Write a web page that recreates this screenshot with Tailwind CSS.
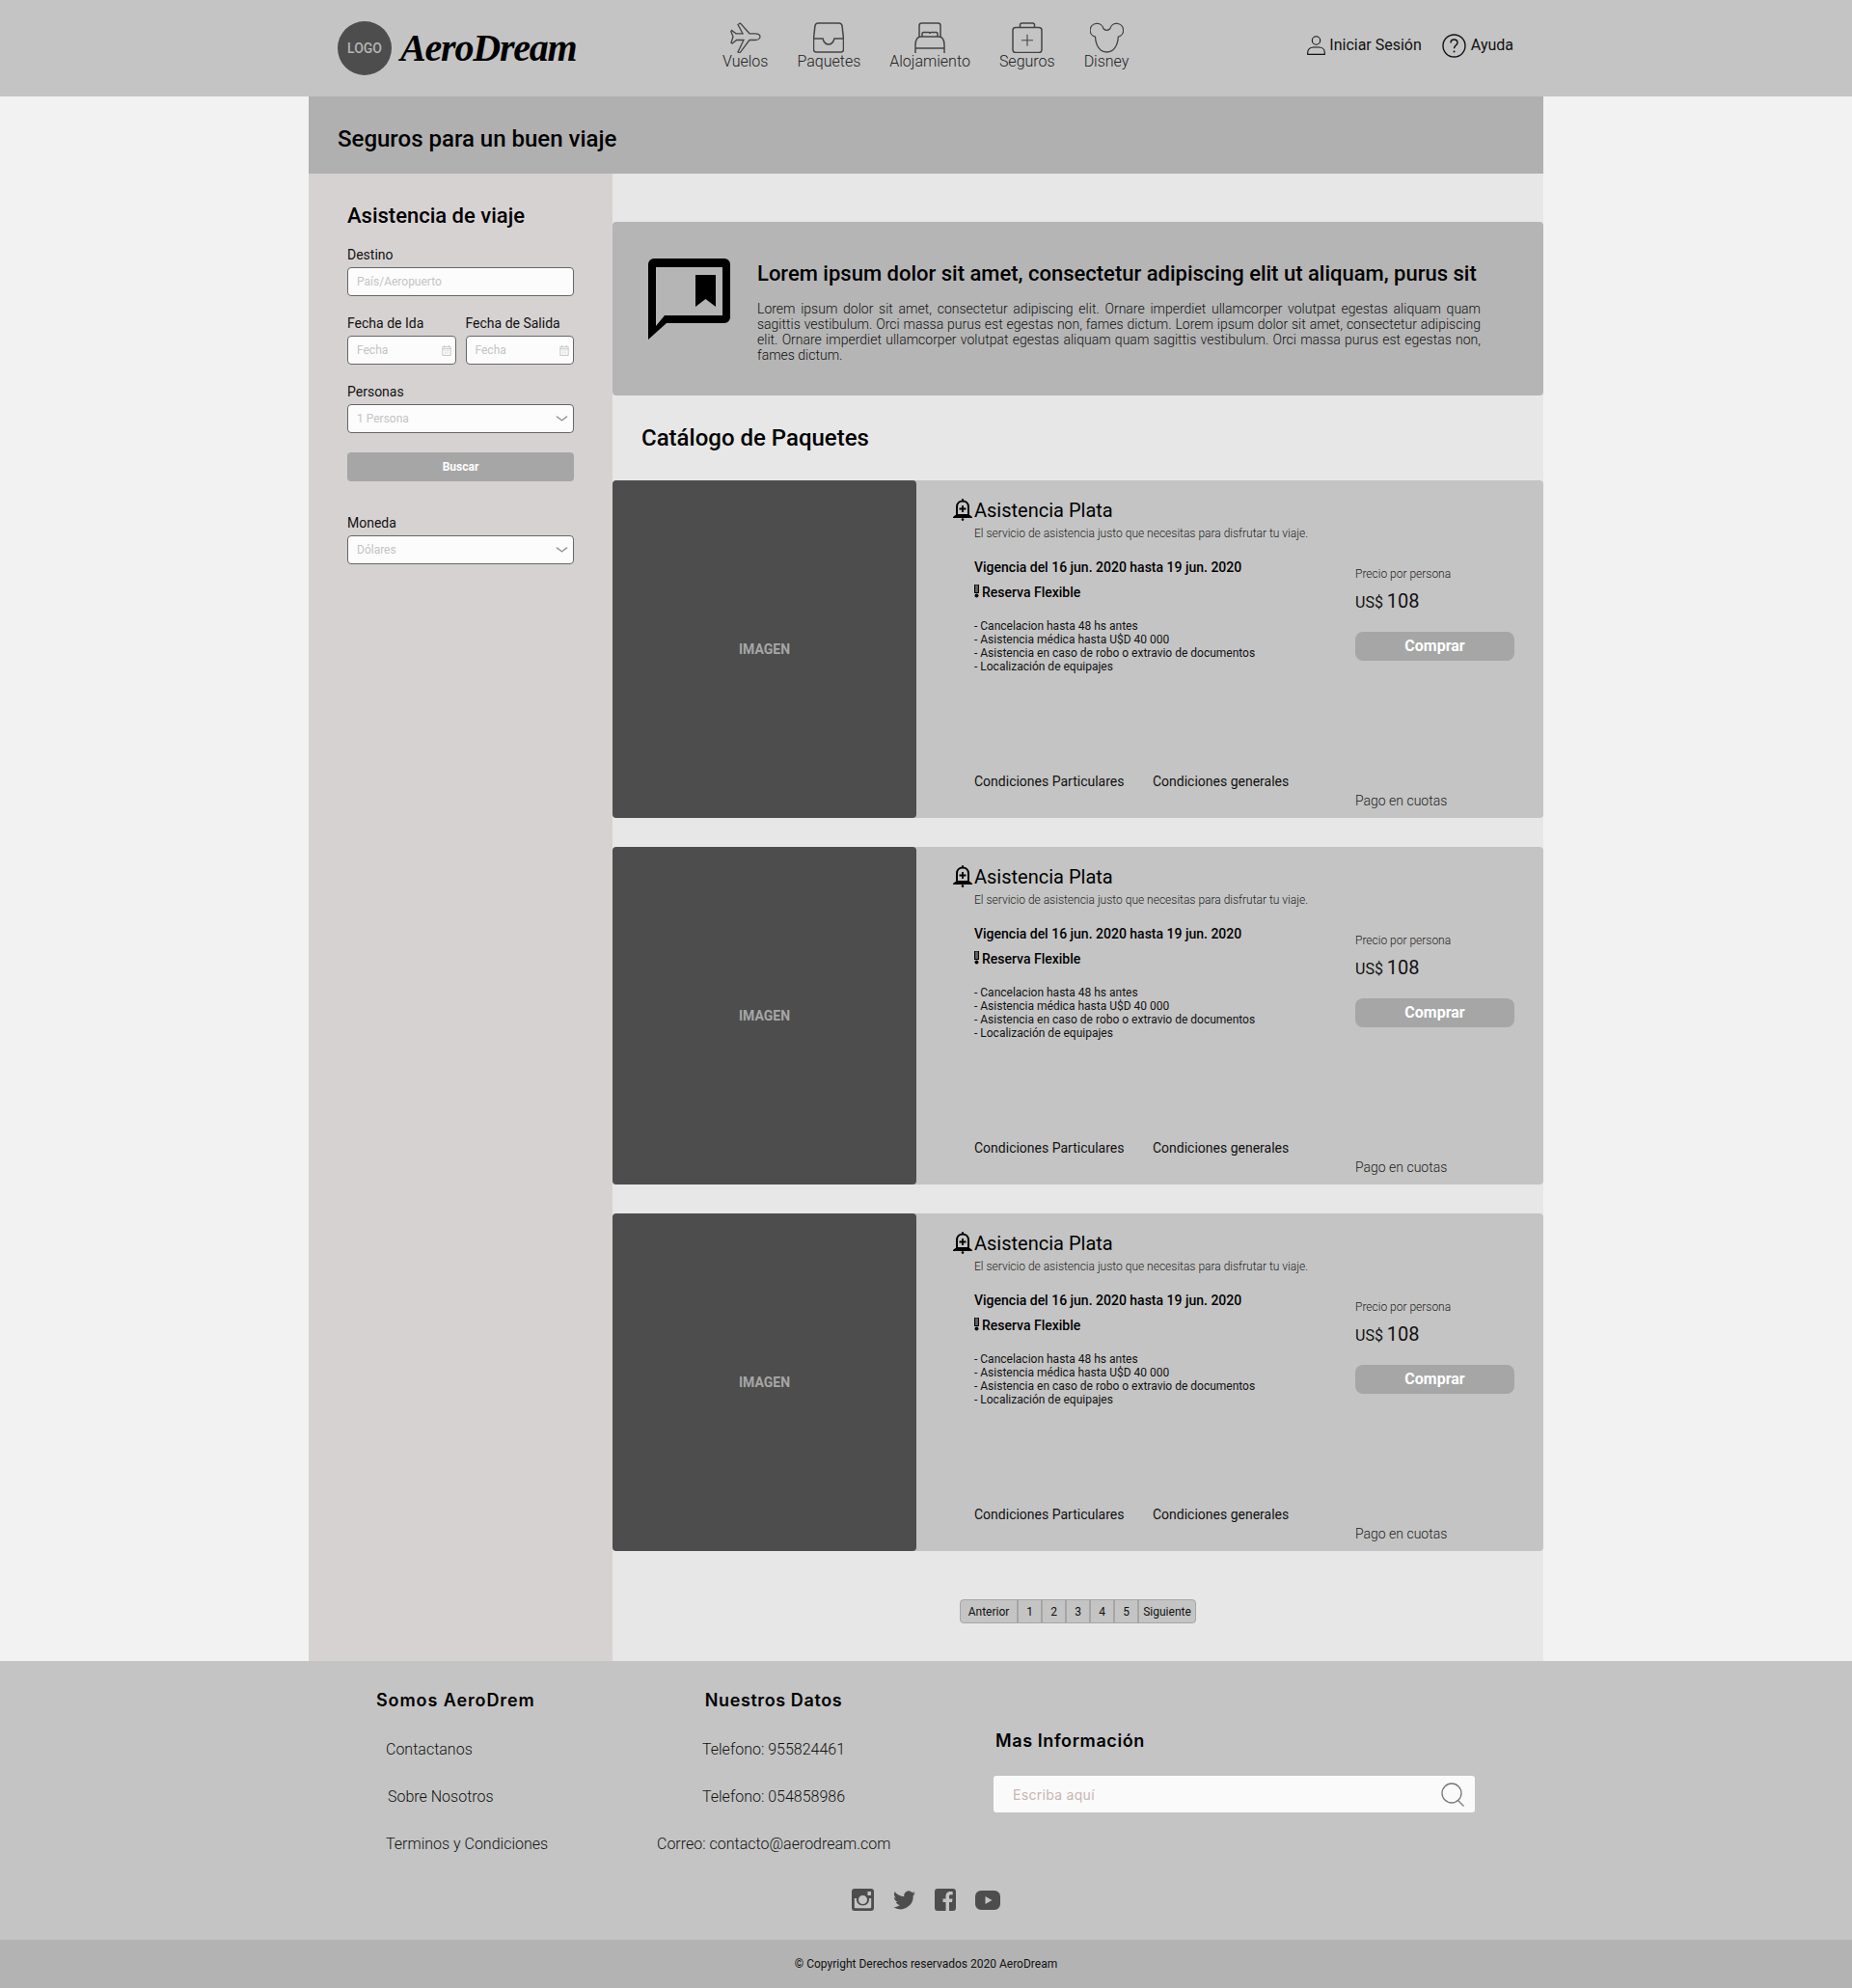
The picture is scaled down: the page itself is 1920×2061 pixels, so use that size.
<!DOCTYPE html>
<html lang="es">
<head>
    <meta charset="UTF-8">
    <meta name="viewport" content="width=device-width, initial-scale=1.0">
    <title>AeroDream - Seguros</title>
    <script src="https://cdn.jsdelivr.net/npm/@tailwindcss/browser@4"></script>
</head>
<body class="bg-[#f2f2f2] text-black font-['Roboto',sans-serif]">

    <!-- shared icons -->
    <svg class="hidden">
        <symbol id="bell" viewBox="0 0 20 24">
            <path d="M10 1.200v2M4 18.500V9.500C4 6 6.500 3.500 10 3.500s6 2.500 6 6v9M1.500 20h17l-2.500-2H4z" fill="none" stroke="currentColor" stroke-width="2"/>
            <path d="M10 8v7M6.500 11.500h7" fill="none" stroke="currentColor" stroke-width="1.800"/>
            <circle cx="10" cy="22.600" r="1.300" fill="currentColor"/>
        </symbol>
        <symbol id="chevron" viewBox="0 0 14 8">
            <path d="M1 1.500c2 1.500 4 3 6 4.500 2-1.500 4-3 6-4.500" fill="none" stroke="currentColor" stroke-width="1.500"/>
        </symbol>
        <symbol id="calendar" viewBox="0 0 12 14">
            <path d="M1 3h10v10.500H1zM1 5.500h10M3.200 1v2M8.800 1v2M3.500 8h1M5.500 8h1M7.500 8h1M3.500 10.500h1M5.500 10.500h1M7.500 10.500h1" fill="none" stroke="currentColor" stroke-width="1"/>
        </symbol>
    </svg>

    <!-- Header -->
    <header class="bg-[#c4c4c4] h-[100px]">
        <div class="w-[1280px] mx-auto h-full flex items-center pl-[30px] pr-[31px]">
            <div class="w-[399px] flex items-center">
                <div class="w-[56px] h-[56px] rounded-full bg-[#4d4d4d] flex items-center justify-center text-[14px] font-medium text-[#b5b5b5]">LOGO</div>
                <span class="pl-[9px] text-[40px] leading-[50px] font-bold italic tracking-[-1.200px] font-['Liberation_Serif',serif]">AeroDream</span>
            </div>
            <nav class="flex gap-[30px] mt-[-3px] text-[16px] leading-[20px] font-light text-[#222]">
                <a class="flex flex-col items-center">
                    <svg class="w-[32px] h-[32px] mt-[-1px] mb-[-1px]" viewBox="0 0 32 32" fill="none" stroke="#444" stroke-width="1.300">
                        <path d="M31 15c0-2-2.500-3.200-5-3.200H20L10.500 1 8 2.500l5 9.300H6L1.500 8.500.8 9.500 3 15 1 21.500l1.200.5 4.500-3.500H14L8 31l2 .8 10-13.300h6c2.500 0 5-1.300 5-3.500z"/>
                    </svg>
                    <span>Vuelos</span>
                </a>
                <a class="flex flex-col items-center">
                    <svg class="w-[32px] h-[32px] mt-[-1px] mb-[-1px]" viewBox="0 0 32 32" fill="none" stroke="#444" stroke-width="1.500">
                        <path d="M5 1h22c1.500 0 2.500 1 3 2.500L31.500 17v11.500c0 1.500-1 2.500-2.500 2.500H3c-1.500 0-2.500-1-2.500-2.500V17L2 3.500C2.500 2 3.500 1 5 1z"/>
                        <path d="M.5 17H10c1 4 3 6 6 6s5-2 6-6h9.500"/>
                    </svg>
                    <span>Paquetes</span>
                </a>
                <a class="flex flex-col items-center">
                    <svg class="w-[32px] h-[32px] mt-[-1px] mb-[-1px]" viewBox="0 0 32 32" fill="none" stroke="#444" stroke-width="1.500">
                        <path d="M5 15V3.500C5 2 6 1 7.500 1h17C26 1 27 2 27 3.500V15"/>
                        <path d="M8 15v-3c0-1 .7-1.500 1.500-1.500H15c.8 0 1 .7 1 1.500 0-.8.2-1.500 1-1.500h5.500c.8 0 1.500.5 1.500 1.500v3"/>
                        <path d="M1 32v-8C1 19 3 15 7 15h18c4 0 6 4 6 9v8M1 27h30"/>
                    </svg>
                    <span>Alojamiento</span>
                </a>
                <a class="flex flex-col items-center">
                    <svg class="w-[32px] h-[32px] mt-[-1px] mb-[-1px]" viewBox="0 0 32 32" fill="none" stroke="#444" stroke-width="1.500">
                        <rect x="1" y="5.500" width="30" height="26" rx="3"/>
                        <path d="M8.500 5.500V3c0-1.200.8-2 2-2h11c1.200 0 2 .8 2 2v2.500"/>
                        <path d="M16 12.700v12M10 18.700h12" stroke-width="1.100"/>
                    </svg>
                    <span>Seguros</span>
                </a>
                <a class="flex flex-col items-center">
                    <svg class="w-[35px] h-[32px] mt-[-1px] mb-[-1px]" viewBox="0 0 35 32" fill="none" stroke="#444" stroke-width="1.300">
                        <path d="M14 6.800A7 7 0 1 0 5.500 15.200C6 24 10 31 17.400 31S28.800 24 29.300 15.200A7 7 0 1 0 20.800 6.800C18.500 9 16.300 9 14 6.800z"/>
                    </svg>
                    <span>Disney</span>
                </a>
            </nav>
            <div class="ml-auto mt-[-6px] flex items-center gap-[21px] text-[16px] text-[#111]">
                <a class="flex items-center gap-[4px]">
                    <svg class="w-[19px] h-[20px]" viewBox="0 0 19 20" fill="none" stroke="currentColor" stroke-width="1.100">
                        <circle cx="9.500" cy="5" r="4.200"/>
                        <path d="M.7 19.400v-2C.7 14 3.500 12 6.500 12h6c3 0 5.800 2 5.800 5.400v2z"/>
                    </svg>
                    <span>Iniciar Sesión</span>
                </a>
                <a class="flex items-center gap-[5px]">
                    <svg class="w-[25px] h-[25px]" viewBox="0 0 25 25" fill="none" stroke="currentColor" stroke-width="1.400">
                        <circle cx="12.500" cy="12.500" r="11.500"/>
                        <path d="M9 9.500c0-2.200 1.500-3.500 3.500-3.500S16 7.300 16 9.200c0 2.700-3.500 3-3.500 6"/>
                        <circle cx="12.500" cy="18.500" r="1" fill="currentColor" stroke="none"/>
                    </svg>
                    <span>Ayuda</span>
                </a>
            </div>
        </div>
    </header>

    <div class="w-[1280px] mx-auto">
        <div class="bg-[#b0b0b0] h-[80px] flex items-center pl-[30px] pt-[7px]">
            <h1 class="text-[24px] font-medium">Seguros para un buen viaje</h1>
        </div>

        <div class="flex h-[1542px]">
            <!-- Search sidebar -->
            <aside class="w-[315px] bg-[#d7d2d2] pl-[40px] pr-[40px] pt-[30px] text-[14px] leading-[20px] text-[#111]">
                <h2 class="text-[22px] leading-[28px] font-medium text-black mb-[16px]">Asistencia de viaje</h2>
                <label>Destino</label>
                <div class="mt-[3px] h-[30px] flex items-center px-[9px] bg-[#fcfcfc] border border-[#666] rounded-[4px] text-[12px] text-[#c4c4c4]">País/Aeropuerto</div>
                <div class="mt-[18px] flex gap-[10px]">
                    <div class="w-[112.500px]">
                        <label>Fecha de Ida</label>
                        <div class="mt-[3px] h-[30px] flex items-center justify-between pl-[9px] pr-[4px] bg-[#fcfcfc] border border-[#666] rounded-[4px] text-[12px] text-[#c4c4c4]">Fecha <svg class="w-[10px] h-[12px] text-[#bbb]"><use href="#calendar"/></svg></div>
                    </div>
                    <div class="w-[112.500px]">
                        <label>Fecha de Salida</label>
                        <div class="mt-[3px] h-[30px] flex items-center justify-between pl-[9px] pr-[4px] bg-[#fcfcfc] border border-[#666] rounded-[4px] text-[12px] text-[#c4c4c4]">Fecha <svg class="w-[10px] h-[12px] text-[#bbb]"><use href="#calendar"/></svg></div>
                    </div>
                </div>
                <div class="mt-[18px]">
                    <label>Personas</label>
                    <div class="mt-[3px] h-[30px] flex items-center justify-between pl-[9px] pr-[5px] bg-[#fcfcfc] border border-[#666] rounded-[4px] text-[12px] text-[#c4c4c4]">1 Persona <svg class="w-[13px] h-[8px] text-[#999]"><use href="#chevron"/></svg></div>
                </div>
                <button class="mt-[20px] w-full h-[30px] bg-[#a6a6a6] rounded-[4px] text-[12px] font-bold text-white">Buscar</button>
                <div class="mt-[33px]">
                    <label>Moneda</label>
                    <div class="mt-[3px] h-[30px] flex items-center justify-between pl-[9px] pr-[5px] bg-[#fcfcfc] border border-[#666] rounded-[4px] text-[12px] text-[#c4c4c4]">Dólares <svg class="w-[13px] h-[8px] text-[#999]"><use href="#chevron"/></svg></div>
                </div>
            </aside>

            <main class="w-[965px] bg-[#e7e7e7] pt-[50px]">
                <!-- Banner -->
                <section class="h-[180px] bg-[#b5b5b5] rounded-[4px] flex pl-[37px] pr-[65px]">
                    <svg class="w-[85px] h-[84px] mt-[38px] shrink-0" viewBox="0 0 85 84">
                        <path d="M6 0h73a6 6 0 0 1 6 6v55a6 6 0 0 1-6 6H19L0 84V6a6 6 0 0 1 6-6zM8 9v61l9-11h60V9z" fill="#000" fill-rule="evenodd"/>
                        <path d="M49 17h21v33L59.500 42 49 50z" fill="#000"/>
                    </svg>
                    <div class="ml-[28px] w-[750px]">
                        <h2 class="mt-[39px] text-[22px] leading-[30px] font-medium whitespace-nowrap">Lorem ipsum dolor sit amet, consectetur adipiscing elit ut aliquam, purus sit</h2>
                        <p class="mt-[13px] text-[14px] leading-[16px] font-light text-justify text-[#111]">Lorem ipsum dolor sit amet, consectetur adipiscing elit. Ornare imperdiet ullamcorper volutpat egestas aliquam quam sagittis vestibulum. Orci massa purus est egestas non, fames dictum. Lorem ipsum dolor sit amet, consectetur adipiscing elit. Ornare imperdiet ullamcorper volutpat egestas aliquam quam sagittis vestibulum. Orci massa purus est egestas non, fames dictum.</p>
                    </div>
                </section>

                <h2 class="mt-[28px] ml-[30px] text-[24px] leading-[32px] font-medium">Catálogo de Paquetes</h2>

                <!-- Catalog -->
                <div class="mt-[28px] flex flex-col gap-[30px]">
                    <article class="h-[350px] bg-[#c4c4c4] rounded-[4px] flex">
                        <div class="w-[315px] bg-[#4d4d4d] rounded-[4px] flex items-center justify-center text-[14px] font-bold text-[#a6a6a6]">IMAGEN</div>
                        <div class="w-[455px] pl-[60px] pt-[19px] pb-[28px] flex flex-col">
                            <h3 class="relative text-[20px] leading-[24px]">
                                <svg class="absolute left-[-22px] top-[-1px] w-[20px] h-[24px]"><use href="#bell"/></svg>
                                Asistencia Plata
                            </h3>
                            <p class="mt-[4px] text-[12px] leading-[16px] font-light text-[#222]">El servicio de asistencia justo que necesitas para disfrutar tu viaje.</p>
                            <p class="mt-[17px] text-[14px] leading-[20px] font-medium">Vigencia del 16 jun. 2020 hasta 19 jun. 2020</p>
                            <p class="mt-[6px] text-[14px] leading-[20px] font-medium flex items-center gap-[3px]">
                                <svg class="w-[5px] h-[14px] mt-[-3px]" viewBox="0 0 5 14"><path d="M.5 0h4v8.500h-4z" fill="#666" stroke="#000" stroke-width="1.200"/><circle cx="2.500" cy="11.500" r="2"/></svg>
                                Reserva Flexible
                            </p>
                            <ul class="mt-[18px] text-[12px] leading-[14px] text-[#111]">
                                <li>- Cancelacion hasta 48 hs antes</li>
                                <li>- Asistencia médica hasta U$D 40 000</li>
                                <li>- Asistencia en caso de robo o extravio de documentos</li>
                                <li>- Localización de equipajes</li>
                            </ul>
                            <div class="mt-auto flex gap-[29.500px] text-[14px] leading-[20px] text-[#111]">
                                <a>Condiciones Particulares</a>
                                <a>Condiciones generales</a>
                            </div>
                        </div>
                        <div class="w-[165px] pt-[89px] pb-[8px] flex flex-col">
                            <p class="text-[12px] leading-[16px] font-light text-[#222]">Precio por persona</p>
                            <p class="mt-[6px] text-[20px] leading-[28px] text-[#111]"><span class="text-[16px] mr-[-1px]">US$</span> 108</p>
                            <button class="mt-[16px] h-[30px] bg-[#a6a6a6] rounded-[8px] text-[16px] font-bold text-white">Comprar</button>
                            <p class="mt-auto text-[14px] leading-[20px] font-light text-[#222]">Pago en cuotas</p>
                        </div>
                    </article>

                    <article class="h-[350px] bg-[#c4c4c4] rounded-[4px] flex">
                        <div class="w-[315px] bg-[#4d4d4d] rounded-[4px] flex items-center justify-center text-[14px] font-bold text-[#a6a6a6]">IMAGEN</div>
                        <div class="w-[455px] pl-[60px] pt-[19px] pb-[28px] flex flex-col">
                            <h3 class="relative text-[20px] leading-[24px]">
                                <svg class="absolute left-[-22px] top-[-1px] w-[20px] h-[24px]"><use href="#bell"/></svg>
                                Asistencia Plata
                            </h3>
                            <p class="mt-[4px] text-[12px] leading-[16px] font-light text-[#222]">El servicio de asistencia justo que necesitas para disfrutar tu viaje.</p>
                            <p class="mt-[17px] text-[14px] leading-[20px] font-medium">Vigencia del 16 jun. 2020 hasta 19 jun. 2020</p>
                            <p class="mt-[6px] text-[14px] leading-[20px] font-medium flex items-center gap-[3px]">
                                <svg class="w-[5px] h-[14px] mt-[-3px]" viewBox="0 0 5 14"><path d="M.5 0h4v8.500h-4z" fill="#666" stroke="#000" stroke-width="1.200"/><circle cx="2.500" cy="11.500" r="2"/></svg>
                                Reserva Flexible
                            </p>
                            <ul class="mt-[18px] text-[12px] leading-[14px] text-[#111]">
                                <li>- Cancelacion hasta 48 hs antes</li>
                                <li>- Asistencia médica hasta U$D 40 000</li>
                                <li>- Asistencia en caso de robo o extravio de documentos</li>
                                <li>- Localización de equipajes</li>
                            </ul>
                            <div class="mt-auto flex gap-[29.500px] text-[14px] leading-[20px] text-[#111]">
                                <a>Condiciones Particulares</a>
                                <a>Condiciones generales</a>
                            </div>
                        </div>
                        <div class="w-[165px] pt-[89px] pb-[8px] flex flex-col">
                            <p class="text-[12px] leading-[16px] font-light text-[#222]">Precio por persona</p>
                            <p class="mt-[6px] text-[20px] leading-[28px] text-[#111]"><span class="text-[16px] mr-[-1px]">US$</span> 108</p>
                            <button class="mt-[16px] h-[30px] bg-[#a6a6a6] rounded-[8px] text-[16px] font-bold text-white">Comprar</button>
                            <p class="mt-auto text-[14px] leading-[20px] font-light text-[#222]">Pago en cuotas</p>
                        </div>
                    </article>

                    <article class="h-[350px] bg-[#c4c4c4] rounded-[4px] flex">
                        <div class="w-[315px] bg-[#4d4d4d] rounded-[4px] flex items-center justify-center text-[14px] font-bold text-[#a6a6a6]">IMAGEN</div>
                        <div class="w-[455px] pl-[60px] pt-[19px] pb-[28px] flex flex-col">
                            <h3 class="relative text-[20px] leading-[24px]">
                                <svg class="absolute left-[-22px] top-[-1px] w-[20px] h-[24px]"><use href="#bell"/></svg>
                                Asistencia Plata
                            </h3>
                            <p class="mt-[4px] text-[12px] leading-[16px] font-light text-[#222]">El servicio de asistencia justo que necesitas para disfrutar tu viaje.</p>
                            <p class="mt-[17px] text-[14px] leading-[20px] font-medium">Vigencia del 16 jun. 2020 hasta 19 jun. 2020</p>
                            <p class="mt-[6px] text-[14px] leading-[20px] font-medium flex items-center gap-[3px]">
                                <svg class="w-[5px] h-[14px] mt-[-3px]" viewBox="0 0 5 14"><path d="M.5 0h4v8.500h-4z" fill="#666" stroke="#000" stroke-width="1.200"/><circle cx="2.500" cy="11.500" r="2"/></svg>
                                Reserva Flexible
                            </p>
                            <ul class="mt-[18px] text-[12px] leading-[14px] text-[#111]">
                                <li>- Cancelacion hasta 48 hs antes</li>
                                <li>- Asistencia médica hasta U$D 40 000</li>
                                <li>- Asistencia en caso de robo o extravio de documentos</li>
                                <li>- Localización de equipajes</li>
                            </ul>
                            <div class="mt-auto flex gap-[29.500px] text-[14px] leading-[20px] text-[#111]">
                                <a>Condiciones Particulares</a>
                                <a>Condiciones generales</a>
                            </div>
                        </div>
                        <div class="w-[165px] pt-[89px] pb-[8px] flex flex-col">
                            <p class="text-[12px] leading-[16px] font-light text-[#222]">Precio por persona</p>
                            <p class="mt-[6px] text-[20px] leading-[28px] text-[#111]"><span class="text-[16px] mr-[-1px]">US$</span> 108</p>
                            <button class="mt-[16px] h-[30px] bg-[#a6a6a6] rounded-[8px] text-[16px] font-bold text-white">Comprar</button>
                            <p class="mt-auto text-[14px] leading-[20px] font-light text-[#222]">Pago en cuotas</p>
                        </div>
                    </article>
                </div>

                <!-- Pagination -->
                <div class="mt-[50px] ml-[360px] w-[245px] h-[25px] flex bg-[#c4c4c4] border border-[#a6a6a6] rounded-[4px] text-[12px] text-[#111] divide-x-2 divide-[#a6a6a6]">
                    <a class="w-[60px] flex items-center justify-center">Anterior</a>
                    <a class="w-[25px] flex items-center justify-center">1</a>
                    <a class="w-[25px] flex items-center justify-center">2</a>
                    <a class="w-[25px] flex items-center justify-center">3</a>
                    <a class="w-[25px] flex items-center justify-center">4</a>
                    <a class="w-[25px] flex items-center justify-center">5</a>
                    <a class="flex-1 flex items-center justify-center">Siguiente</a>
                </div>
            </main>
        </div>
    </div>

    <!-- Footer -->
    <footer class="bg-[#c4c4c4] h-[289px] pt-[29px]">
        <div class="flex pl-[390px]">
            <div class="w-[291px]">
                <h4 class="text-[18px] leading-[24px] font-semibold font-['Inter',sans-serif] tracking-[0.900px]">Somos AeroDrem</h4>
                <ul class="mt-[27px] flex flex-col gap-[25px] text-[16px] leading-[24px] font-light text-[#111]">
                    <li class="pl-[10px]">Contactanos</li>
                    <li class="pl-[12px]">Sobre Nosotros</li>
                    <li class="pl-[10px]">Terminos y Condiciones</li>
                </ul>
            </div>
            <div class="w-[242px] text-center">
                <h4 class="text-[18px] leading-[24px] font-semibold font-['Inter',sans-serif] tracking-[0.600px]">Nuestros Datos</h4>
                <ul class="mt-[27px] flex flex-col gap-[25px] text-[16px] leading-[24px] font-light text-[#111] whitespace-nowrap">
                    <li>Telefono: 955824461</li>
                    <li>Telefono: 054858986</li>
                    <li>Correo: contacto@aerodream.com</li>
                </ul>
            </div>
            <div class="ml-[107px] pt-[42px]">
                <h4 class="pl-[2px] text-[18px] leading-[24px] font-semibold font-['Inter',sans-serif] tracking-[0.600px]">Mas Información</h4>
                <div class="mt-[24px] w-[499px] h-[38px] bg-[#fafafa] rounded-[3px] flex items-center justify-between pl-[20px] pr-[10px] text-[14px] tracking-[0.300px] text-[#c9b5b5] font-['Inter',sans-serif]">
                    Escriba aquí
                    <svg class="w-[25px] h-[25px]" viewBox="0 0 25 25" fill="none" stroke="#777" stroke-width="1.300">
                        <circle cx="11" cy="11" r="10"/>
                        <path d="M17.500 18.500l6 6"/>
                    </svg>
                </div>
            </div>
        </div>
        <div class="mt-[34px] flex justify-center items-center gap-[20px] text-[#4d4d4d]">
            <svg class="w-[23px] h-[23px]" viewBox="0 0 23 23" fill="currentColor">
                <path fill-rule="evenodd" d="M3 0h17a3 3 0 0 1 3 3v17a3 3 0 0 1-3 3H3a3 3 0 0 1-3-3V3a3 3 0 0 1 3-3zm13.500 3v4H20V3zM2.800 10v9.500c0 .5.300.8.800.8h15.800c.5 0 .8-.3.800-.8V10h-2.300c.9 4-2.300 7.500-6.400 7.500S4.200 14 5.100 10zm8.700-3a4.500 4.500 0 1 0 0 9 4.500 4.500 0 0 0 0-9z"/>
            </svg>
            <svg class="w-[23px] h-[20px]" viewBox="0 0 24 20" fill="currentColor">
                <path d="M24 2.400c-.9.400-1.800.7-2.800.8 1-.6 1.800-1.600 2.200-2.700-1 .6-2 1-3.100 1.200A4.900 4.900 0 0 0 11.900 6.200C7.800 6 4.200 4 1.700.9c-1.300 2.200-.7 5.100 1.500 6.600-.8 0-1.600-.2-2.200-.6 0 2.400 1.700 4.400 4 4.900-.7.200-1.500.2-2.200.1.600 2 2.500 3.400 4.600 3.400A9.900 9.900 0 0 1 0 17.400 13.900 13.900 0 0 0 21.600 5c1-.7 1.800-1.600 2.400-2.600z"/>
            </svg>
            <svg class="w-[22px] h-[23px]" viewBox="0 0 22 23" fill="currentColor">
                <path d="M3 0h16a3 3 0 0 1 3 3v17a3 3 0 0 1-3 3h-4v-9h3l.5-3.500H15V8c0-1 .4-1.700 1.800-1.700h1.900V3.200c-.4 0-1.500-.2-2.700-.2-2.700 0-4.500 1.700-4.500 4.600v2.900H8.500V14h3v9H3a3 3 0 0 1-3-3V3a3 3 0 0 1 3-3z"/>
            </svg>
            <svg class="w-[26px] h-[20px]" viewBox="0 0 26 20" fill="currentColor">
                <path fill-rule="evenodd" d="M6 0h14a6 6 0 0 1 6 6v8a6 6 0 0 1-6 6H6a6 6 0 0 1-6-6V6a6 6 0 0 1 6-6zm4.500 6v8l7-4z"/>
            </svg>
        </div>
    </footer>
    <div class="bg-[#b3b3b3] h-[50px] flex items-center justify-center text-[12px] text-[#111]">© Copyright Derechos reservados 2020 AeroDream</div>

</body>
</html>
